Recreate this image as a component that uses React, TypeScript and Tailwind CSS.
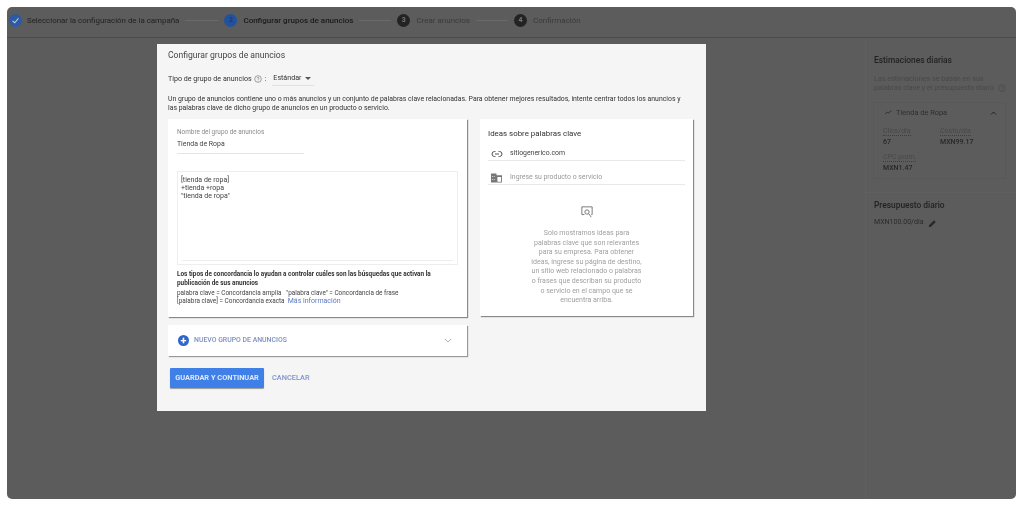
import React from "react";

function Step({ n, label, circle, text }: { n: string; label: string; circle: string; text: string }) {
  return (
    <div className="flex items-center">
      <span className={`flex h-[13px] w-[13px] items-center justify-center rounded-full text-[7px] font-bold ${circle}`}>{n}</span>
      <span className={`ml-[6px] whitespace-nowrap text-[8px] ${text}`}>{label}</span>
    </div>
  );
}

function Line() {
  return <div className="mx-[6px] h-px w-[32px] bg-[#6a6a6a]" />;
}

export default function App() {
  return (
    <div className="h-[506px] w-[1024px] overflow-hidden bg-white p-[7px] font-['Roboto',sans-serif]">
      <div className="flex h-[492px] w-[1009px] flex-col overflow-hidden rounded-[5px] bg-[#5c5c5c] blur-[0.35px]">
        <header className="flex h-[31px] shrink-0 items-center border-b border-[#4c4c4c] pb-[3px] pl-[2px]">
          <div className="flex items-center">
            <span className="flex h-[13px] w-[13px] items-center justify-center rounded-full bg-[#2a5aa8]">
              <svg viewBox="0 0 12 12" className="h-[9px] w-[9px]" fill="none" stroke="#c9c9c9" strokeWidth="1.5"><path d="M2 6.5 5 9l5-6" /></svg>
            </span>
            <span className="ml-[5px] whitespace-nowrap text-[7.9px] text-[#222]">Seleccionar la configuración de la campaña</span>
          </div>
          <div className="mx-[6px] h-px w-[33px] bg-[#6a6a6a]" />
          <Step n="2" label="Configurar grupos de anuncios" circle="bg-[#23519c] text-[#1a3a70]" text="font-medium text-[#1a1a1a]" />
          <Line />
          <Step n="3" label="Crear anuncios" circle="bg-[#232323] text-[#777]" text="text-[#3a3a3a]" />
          <Line />
          <Step n="4" label="Confirmación" circle="bg-[#232323] text-[#777]" text="text-[#3a3a3a]" />
        </header>

        <div className="flex min-h-0 flex-1">
          <main className="flex-1 pl-[150px] pt-[6px]">
            <section className="flex h-[367px] w-[549px] flex-col bg-[#f5f5f5] pl-[11px] pt-[5px]">
              <h1 className="text-[8.6px] leading-[12px] text-[#444]">Configurar grupos de anuncios</h1>
              <div className="mt-[11px] flex h-[14px] items-center text-[7.1px] text-[#333]">
                <span>Tipo de grupo de anuncios</span>
                <svg viewBox="0 0 12 12" className="ml-[2px] h-[8px] w-[8px]" fill="none" stroke="#777" strokeWidth="1"><circle cx="6" cy="6" r="5" /><path d="M4.5 4.8c.2-1.7 3-1.6 3 0 0 1.1-1.5 1.1-1.5 2.4M6 8.5v1" /></svg>
                <span className="ml-[3px]">:</span>
                <span className="ml-[6px] flex h-[14px] w-[42px] items-center border-b border-[#e2e2e2] pl-[1px]">
                  Estándar
                  <span className="ml-[4px] h-0 w-0 border-x-[3px] border-t-[3px] border-x-transparent border-t-[#555]" />
                </span>
              </div>
              <p className="mt-[9px] w-[520px] text-[6.9px] leading-[8.5px] text-[#333]">
                Un grupo de anuncios contiene uno o más anuncios y un conjunto de palabras clave relacionadas. Para obtener mejores resultados, intente centrar todos los anuncios y las palabras clave de dicho grupo de anuncios en un producto o servicio.
              </p>

              <div className="mt-[7px] flex items-start">
                <div className="w-[299px]">
                  <div className="h-[198px] bg-white px-[9px] pt-[9px] shadow-[1px_1px_1px_#8a8a8a]">
                    <div className="text-[6.4px] leading-[9px] text-[#8a8a8a]">Nombre del grupo de anuncios</div>
                    <div className="mt-[3px] h-[14px] w-[127px] border-b border-[#e5e5e5] text-[6.9px] leading-[9px] text-[#444]">Tienda de Ropa</div>
                    <div className="mt-[17px] flex h-[94px] w-[281px] flex-col border border-[#eeeeee] pl-[3px] pt-[4px] text-[7px] leading-[8px] text-[#444]">
                      <div>[tienda de ropa]</div>
                      <div>+tienda +ropa</div>
                      <div>"tienda de ropa"</div>
                      <div className="mb-[3px] ml-[1px] mr-[4px] mt-auto h-px bg-[#eeeeee]" />
                    </div>
                    <p className="mt-[5px] text-[6.4px] font-bold leading-[8.5px] text-[#333]">
                      Los tipos de concordancia lo ayudan a controlar cuáles son las búsquedas que activan la<br />publicación de sus anuncios
                    </p>
                    <div className="mt-[2px] text-[6.4px] leading-[8px] text-[#444]">
                      <div>palabra clave = Concordancia amplia &nbsp; "palabra clave" = Concordancia de frase</div>
                      <div>[palabra clave] = Concordancia exacta &nbsp;<span className="text-[7px] text-[#5a78c4]">Más información</span></div>
                    </div>
                  </div>
                  <div className="mt-[8px] flex h-[31px] items-center bg-white pl-[10px] pr-[15px] shadow-[1px_1px_1px_#9a9a9a]">
                    <span className="flex h-[11px] w-[11px] items-center justify-center rounded-full bg-[#2f66c8] text-[11px] font-bold leading-none text-white">+</span>
                    <span className="ml-[5px] text-[6.9px] font-medium text-[#7d8fc2]">NUEVO GRUPO DE ANUNCIOS</span>
                    <svg viewBox="0 0 12 8" className="ml-auto h-[5px] w-[8px]" fill="none" stroke="#aaa" strokeWidth="1.5"><path d="M1 1.5l5 5 5-5" /></svg>
                  </div>
                  <div className="ml-[2px] mt-[12px] flex items-center">
                    <button className="h-[20px] w-[94px] rounded-[1px] bg-[#3f7fe8] text-[7.4px] font-bold text-[#dfe8fa] shadow-[0_1px_1px_#999]">GUARDAR Y CONTINUAR</button>
                    <span className="ml-[8px] text-[7.4px] font-medium text-[#7d93cf]">CANCELAR</span>
                  </div>
                </div>

                <div className="ml-[13px] h-[197px] w-[213px] bg-white px-[8px] pt-[9px] shadow-[1px_1px_1px_#8a8a8a]">
                  <h2 className="text-[7.9px] leading-[11px] text-[#333]">Ideas sobre palabras clave</h2>
                  <div className="mt-[4px] flex h-[18px] items-center border-b border-[#e8e8e8] pt-[4px]">
                    <svg viewBox="0 0 24 24" className="ml-[3px] h-[12px] w-[12px]" fill="none" stroke="#555" strokeWidth="2"><path d="M9 17H7A5 5 0 0 1 7 7h2M15 7h2a5 5 0 1 1 0 10h-2M8 12h8" /></svg>
                    <span className="ml-[7px] text-[6.9px] text-[#444]">sitiogenerico.com</span>
                  </div>
                  <div className="mt-[6px] flex h-[18px] items-center border-b border-[#e8e8e8] pt-[4px]">
                    <svg viewBox="0 0 12 10" className="ml-[3px] h-[10px] w-[11px]" fill="#777"><path d="M0 0h6v2h6v8H0zM1 3v1h1V3zm2 0v1h1V3zM1 6v1h1V6zm2 0v1h1V6zm4-2v5h4V4z" fillRule="evenodd" /></svg>
                    <span className="ml-[8px] text-[6.9px] text-[#999]">Ingrese su producto o servicio</span>
                  </div>
                  <div className="mt-[21px] flex justify-center">
                    <svg viewBox="0 0 14 14" className="h-[12px] w-[12px]" fill="none" stroke="#666" strokeWidth="1"><path d="M4 10H1V1h12v9h-1" /><circle cx="7" cy="7" r="2.5" /><path d="M9 9l3 4" /></svg>
                  </div>
                  <p className="mt-[11px] whitespace-nowrap text-center text-[7px] leading-[9.6px] text-[#a0a0a0]">
                    Solo mostramos ideas para<br />palabras clave que son relevantes<br />para su empresa. Para obtener<br />ideas, ingrese su página de destino,<br />un sitio web relacionado o palabras<br />o frases que describan su producto<br />o servicio en el campo que se<br />encuentra arriba.
                  </p>
                </div>
              </div>
            </section>
          </main>

          <aside className="w-[151px] shrink-0 border-l border-[#606060] blur-[0.5px]">
            <div className="h-[155px] border-b border-[#606060] px-[8px] pt-[17px]">
              <h3 className="text-[8.4px] font-medium leading-[10px] text-[#222]">Estimaciones diarias</h3>
              <p className="mt-[9px] flex flex-wrap items-center text-[7.2px] leading-[9px] text-[#494949]">
                <span>Las estimaciones se basan en sus</span>
                <span className="flex items-center whitespace-nowrap">palabras clave y el presupuesto diario
                  <svg viewBox="0 0 12 12" className="ml-[4px] h-[8px] w-[8px]" fill="none" stroke="#494949" strokeWidth="1"><circle cx="6" cy="6" r="5" /><path d="M4.5 4.8c.2-1.7 3-1.6 3 0 0 1.1-1.5 1.1-1.5 2.4M6 8.5v1" /></svg>
                </span>
              </p>
              <div className="-ml-[1px] mt-[10px] h-[77px] w-[133px] border border-[#585858] pl-[9px] pt-[4px]">
                <div className="flex items-center text-[7.4px] text-[#2e2e2e]">
                  <svg viewBox="0 0 12 8" className="ml-[2px] h-[5px] w-[7px]" fill="none" stroke="#2a2a2a" strokeWidth="1.4"><path d="M0 7l4-4 2 2 5-4" /></svg>
                  <span className="ml-[4px]">Tienda de Ropa</span>
                  <svg viewBox="0 0 12 8" className="ml-[43px] h-[4px] w-[7px]" fill="none" stroke="#222" strokeWidth="2"><path d="M1 7l5-5 5 5" /></svg>
                </div>
                <div className="mt-[8px] flex text-[7px] leading-[10px]">
                  <div className="w-[57px]">
                    <span className="border-b border-dotted border-[#3d3d3d] text-[#484848]">Clics/día</span>
                    <div className="mt-[1px] font-medium text-[#282828]">67</div>
                  </div>
                  <div>
                    <span className="border-b border-dotted border-[#3d3d3d] text-[#484848]">Costo/día</span>
                    <div className="mt-[1px] font-medium text-[#282828]">MXN99.17</div>
                  </div>
                </div>
                <div className="mt-[5px] text-[7px] leading-[10px]">
                  <span className="border-b border-dotted border-[#3d3d3d] text-[#484848]">CPC prom.</span>
                  <div className="mt-[1px] font-medium text-[#282828]">MXN1.47</div>
                </div>
              </div>
            </div>
            <div className="pl-[8px] pt-[7px]">
              <h3 className="text-[8.4px] font-medium leading-[10px] text-[#222]">Presupuesto diario</h3>
              <div className="mt-[7px] flex items-center text-[7px] text-[#2a2a2a]">
                <span>MXN100.00/día</span>
                <svg viewBox="0 0 12 12" className="ml-[5px] mt-[2px] h-[9px] w-[9px]" fill="#2a2a2a"><path d="M1 11l.6-3L8 1.6 10.4 4 4 10.4z" /></svg>
              </div>
            </div>
          </aside>
        </div>
      </div>
    </div>
  );
}
